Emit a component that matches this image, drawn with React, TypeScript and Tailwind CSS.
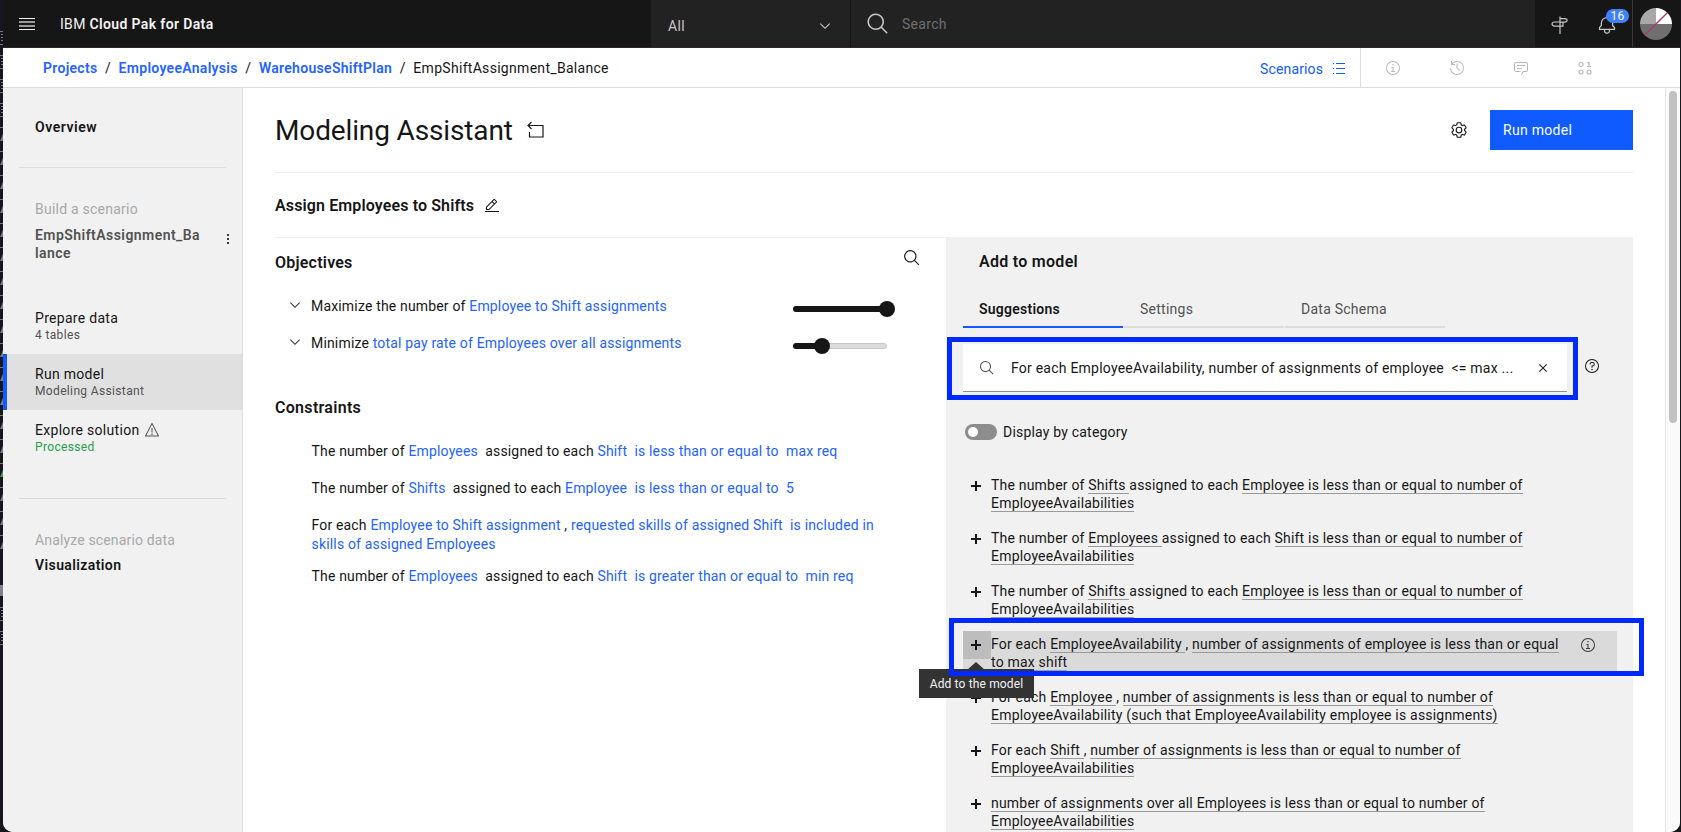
import React from "react";

const P = {
  search:
    "M29,27.5859l-7.5521-7.5521a11.0177,11.0177,0,1,0-1.4141,1.4141L27.5859,29ZM4,13a9,9,0,1,1,9,9A9.01,9.01,0,0,1,4,13Z",
  chevron: "M16 22L6 12l1.4-1.4 8.6 8.6 8.6-8.6L26 12z",
  close:
    "M24 9.4L22.6 8 16 14.6 9.4 8 8 9.4 14.6 16 8 22.6 9.4 24 16 17.4 22.6 24 24 22.6 17.4 16 24 9.4z",
  info: "M17 22V14H13v2h2v6H12v2h8V22zM16 8a1.5 1.5 0 1 0 1.5 1.5A1.5 1.5 0 0 0 16 8zM16,30A14,14,0,1,1,30,16,14,14,0,0,1,16,30ZM16,4A12,12,0,1,0,28,16,12,12,0,0,0,16,4Z",
  bell: "M28.7071,19.293,26,16.5859V13a10.0136,10.0136,0,0,0-9-9.9492V1H15V3.0508A10.0136,10.0136,0,0,0,6,13v3.5859L3.2929,19.293A1,1,0,0,0,3,20v3a1,1,0,0,0,1,1h7v.7768a5.152,5.152,0,0,0,4.5,5.1987A5.0057,5.0057,0,0,0,21,25V24h7a1,1,0,0,0,1-1V20A1,1,0,0,0,28.7071,19.293ZM19,25a3,3,0,0,1-6,0V24h6Zm8-3H5V20.4141L7.707,17.707A1,1,0,0,0,8,17V13a8,8,0,0,1,16,0v4a1,1,0,0,0,.293.707L27,20.4141Z",
  recent:
    "M20.59 22L15 16.41V7h2v8.58l5 5.01zM16,2A13.94,13.94,0,0,0,6,6.23V2H4v8h8V8H7.08A12,12,0,1,1,4,16H2A14,14,0,1,0,16,2Z",
  chat: "M17.74,30,16,29l4-7h6a2,2,0,0,0,2-2V8a2,2,0,0,0-2-2H6A2,2,0,0,0,4,8V20a2,2,0,0,0,2,2h9v2H6a4,4,0,0,1-4-4V8A4,4,0,0,1,6,4H26a4,4,0,0,1,4,4V20a4,4,0,0,1-4,4H21.16ZM8 10H24V12H8zM8 16H18V18H8z",
  edit: "M2 26H30V28H2zM25.4,9c.8-.8.8-2,0-2.8l-3.6-3.6c-.8-.8-2-.8-2.8,0l-15,15V24h6.4L25.4,9zM20.4,4L24,7.6l-3,3L17.4,7L20.4,4zM6,22v-3.6l10-10l3.6,3.6l-10,10H6z",
  settings:
    "M27,16.76c0-.25,0-.5,0-.76s0-.51,0-.77l1.92-1.68A2,2,0,0,0,29.3,11L26.94,7a2,2,0,0,0-1.73-1,2,2,0,0,0-.64.1l-2.43.82a11.35,11.35,0,0,0-1.31-.75l-.51-2.52a2,2,0,0,0-2-1.61H13.64a2,2,0,0,0-2,1.61l-.51,2.52a11.48,11.48,0,0,0-1.32.75L7.43,6.06A2,2,0,0,0,6.79,6,2,2,0,0,0,5.06,7L2.7,11a2,2,0,0,0,.41,2.51L5,15.24c0,.25,0,.5,0,.76s0,.51,0,.77L3.11,18.45A2,2,0,0,0,2.7,21L5.06,25a2,2,0,0,0,1.73,1,2,2,0,0,0,.64-.1l2.43-.82a11.35,11.35,0,0,0,1.31.75l.51,2.52a2,2,0,0,0,2,1.61h4.72a2,2,0,0,0,2-1.61l.51-2.52a11.48,11.48,0,0,0,1.32-.75l2.42.82a2,2,0,0,0,.64.1,2,2,0,0,0,1.73-1L29.3,21a2,2,0,0,0-.41-2.51ZM25.21,24l-3.43-1.16a8.86,8.86,0,0,1-2.71,1.57L18.36,28H13.64l-.71-3.55a9.36,9.36,0,0,1-2.7-1.57L6.79,24,4.43,20l2.72-2.4a8.9,8.9,0,0,1,0-3.13L4.43,12,6.79,8l3.43,1.16a8.86,8.86,0,0,1,2.71-1.57L13.64,4h4.72l.71,3.55a9.36,9.36,0,0,1,2.7,1.57L25.21,8,27.57,12l-2.72,2.4a8.9,8.9,0,0,1,0,3.13L27.57,20ZM16,22a6,6,0,1,1,6-6A5.94,5.94,0,0,1,16,22Zm0-10a3.91,3.91,0,0,0-4,4,3.91,3.91,0,0,0,4,4,3.91,3.91,0,0,0,4-4A3.91,3.91,0,0,0,16,12Z",
  warning:
    "M16,23a1.5,1.5,0,1,0,1.5,1.5A1.5,1.5,0,0,0,16,23ZM15 12H17V21H15zM29,29H3a1,1,0,0,1-.89-1.46l13-25a1,1,0,0,1,1.78,0l13,25A1,1,0,0,1,29,29ZM4.65,27h22.7L16,5.17z",
  help: "M16,2A14,14,0,1,0,30,16,14,14,0,0,0,16,2Zm0,26A12,12,0,1,1,28,16,12,12,0,0,1,16,28ZM16 21.5a1.5 1.5 0 1 0 1.5 1.5A1.5 1.5 0 0 0 16 21.5zM17,8H15.5A4.49,4.49,0,0,0,11,12.5V13h2v-.5A2.5,2.5,0,0,1,15.5,10H17a2.5,2.5,0,0,1,0,5H15v4.5h2V17a4.5,4.5,0,0,0,0-9Z",
};

function Icon({ d, size = 16, className = "" }: { d: string; size?: number; className?: string }) {
  return (
    <svg width={size} height={size} viewBox="0 0 32 32" fill="currentColor" fillRule="evenodd" className={`shrink-0 ${className}`}>
      <path d={d} />
    </svg>
  );
}

function Plus() {
  return (
    <svg width="10" height="10" viewBox="0 0 10 10" fill="none" stroke="#161616" strokeWidth="2" className="mr-0.5 shrink-0">
      <path d="M5 0v10M0 5h10" />
    </svg>
  );
}

/* Sliver of the window behind the app */
function DesktopEdge() {
  const docs = [31, 55, 79, 103, 607, 631];
  const marks = Array.from({ length: 18 }, (_, i) => 127 + i * 24);
  return (
    <svg width="3" height="832" viewBox="0 0 3 832" className="shrink-0">
      {docs.map((y) => (
        <path key={y} d={`M0 ${y + 0.5}h3M1 ${y + 3.5}h2M1 ${y + 6.5}h2M1 ${y + 9.5}h2M0 ${y + 13.5}h3`} stroke="#777a85" />
      ))}
      {marks.map((y) => (
        <g key={y} fill={y === 463 ? "#4c9a5b" : "#777d8c"}>
          <path d={`M0 ${y}h3v1H0z`} />
          <path d={`M3 ${y + 7}v7H0z`} />
        </g>
      ))}
      <path d="M0 585h3v11H0z" fill="#7d8290" />
    </svg>
  );
}

function Header() {
  return (
    <header className="flex h-12 shrink-0 border-b border-[#2f282b] bg-[#161616] text-sm tracking-[.3px]">
      <div className="flex w-[648px] items-center pl-4">
        <svg width="16" height="12" viewBox="0 0 16 12" fill="none">
          <path d="M0 .5h16M0 11.5h16" stroke="#f4f4f4" />
          <path d="M0 4h16M0 8h16" stroke="#c6c6c6" strokeWidth="1.3" />
        </svg>
        <div className="ml-[25px] text-[#f4f4f4]">
          IBM <span className="font-semibold tracking-[.37px]">Cloud Pak for Data</span>
        </div>
      </div>
      <div className="flex w-[200px] items-center justify-between border-r border-[#161616] bg-[#222] pt-1 pr-[17px] pl-[17px] text-[#c6c6c6]">
        All
        <Icon d={P.chevron} />
      </div>
      <div className="flex flex-1 items-center bg-[#222] pl-[15px]">
        <Icon d={P.search} size={24} className="mt-px text-[#c6c6c6]" />
        <span className="ml-3 text-[#6f6f6f]">Search</span>
      </div>
      <div className="flex w-[98px] items-center border-r border-[#393939] pl-[15px] text-[#c6c6c6]">
        <svg width="20" height="20" viewBox="0 0 20 20" fill="none" stroke="currentColor" strokeWidth="1.2" className="mt-0.5">
          <path d="M10 1.5V19M10 3.6h5.2q2 .4 2 1.7t-2 1.8H10M10 7H4q-2 .6-2 2.1t2 2h9V7" />
        </svg>
        <div className="relative ml-[27px]">
          <Icon d={P.bell} size={20} className="mt-0.5" />
          <span className="absolute -top-[4px] left-[9px] flex h-[14px] w-[23px] items-center justify-center rounded-full bg-[#4080ff] text-xs text-white">
            16
          </span>
        </div>
      </div>
      <div className="flex w-[47px] items-center pl-[7px]">
        <svg width="32" height="32" viewBox="0 0 32 32">
          <path d="M16 16V0A16 16 0 0 0 0 16z" fill="#a8a8a8" />
          <path d="M16 16V0a16 16 0 0 1 16 16z" fill="#fff" />
          <path d="M0 16a16 16 0 0 0 32 0z" fill="#6f6f6f" />
          <path d="M4.7 27.3L27.3 4.7" stroke="#a83a78" strokeWidth="1.4" />
        </svg>
      </div>
    </header>
  );
}

function Breadcrumbs() {
  return (
    <div className="flex h-10 shrink-0 items-center border-b border-[#dcdcdc] text-sm tracking-[.3px]">
      <nav className="flex flex-1 gap-[7.5px] pl-10 whitespace-nowrap">
        <span className="font-semibold text-[#2463ff]">Projects</span>
        <span>/</span>
        <span className="font-semibold text-[#2463ff]">EmployeeAnalysis</span>
        <span>/</span>
        <span className="font-semibold text-[#2463ff]">WarehouseShiftPlan</span>
        <span>/</span>
        <span>EmpShiftAssignment_Balance</span>
      </nav>
      <div className="flex h-full w-[101px] items-center justify-between border-r border-[#dcdcdc] pt-0.5 pr-[15px] tracking-[.15px] text-[#0f5bff]">
        Scenarios
        <svg width="12" height="11" viewBox="0 0 12 11" fill="none" stroke="currentColor">
          <path d="M0 .5h1M3 .5h9M0 10.5h1M3 10.5h9" />
          <path d="M0 5.5h1M3 5.5h9" />
        </svg>
      </div>
      <div className="flex w-[319px] gap-12 pl-6 text-[#b8b8b8]">
        <Icon d={P.info} />
        <Icon d={P.recent} />
        <Icon d={P.chat} />
        <svg width="16" height="16" viewBox="0 0 16 16" fill="none" stroke="currentColor" strokeWidth="1.2">
          <circle cx="4" cy="4.5" r="2" />
          <circle cx="4" cy="12" r="2" />
          <circle cx="12" cy="12" r="2" />
          <path d="M10.3 2.6h1.7v3.8M10 6.5h4" />
        </svg>
      </div>
    </div>
  );
}

function NavItem({ title, sub, active, warn, done }: { title: string; sub: string; active?: boolean; warn?: boolean; done?: boolean }) {
  return (
    <div className={active ? "flex h-14 flex-col justify-center border-l-4 border-[#0f5bff] bg-[#e0e0e0] pl-7" : "flex h-14 flex-col justify-center pl-8"}>
      <div className="flex items-center gap-1 text-sm leading-[18px] tracking-[.3px]">
        {title}
        {warn && <Icon d={P.warning} className="text-[#525252]" />}
      </div>
      <div className={done ? "text-xs tracking-[.35px] text-[#24a148]" : "text-xs tracking-[.35px] text-[#525252]"}>{sub}</div>
    </div>
  );
}

function Sidebar() {
  return (
    <aside className="w-60 shrink-0 border-r border-[#dcdcdc] bg-[#f1f1f1] pt-[29px] text-sm tracking-[.23px]">
      <div className="h-5 pl-8 font-semibold tracking-[.55px]">Overview</div>
      <div className="mr-4 ml-4 mt-[30px] border-t border-[#dcdcdc]" />
      <div className="mt-[31px] pl-8 text-[#a8a8a8]">Build a scenario</div>
      <div className="mt-[7px] flex items-center justify-between pr-[13px] pl-8 font-semibold tracking-[.45px] text-[#525252]">
        <div className="leading-[18px]">
          EmpShiftAssignment_Ba
          <br />
          lance
        </div>
        <svg width="2" height="10" viewBox="0 0 2 10" fill="#393939" className="-mt-2.5">
          <path d="M0 0h2v2H0zM0 4h2v2H0zM0 8h2v2H0z" />
        </svg>
      </div>
      <div className="mt-[36px]">
        <NavItem title="Prepare data" sub="4 tables" />
        <NavItem title="Run model" sub="Modeling Assistant" active />
        <NavItem title="Explore solution" sub="Processed" warn done />
      </div>
      <div className="mr-4 ml-4 mt-8 border-t border-[#dcdcdc]" />
      <div className="mt-[31px] pl-8 tracking-[.15px] text-[#a8a8a8]">Analyze scenario data</div>
      <div className="mt-[5px] pl-8 font-semibold tracking-[.4px]">Visualization</div>
    </aside>
  );
}

const B = ({ children }: { children: React.ReactNode }) => <span className="text-[#2463ff]">{children}</span>;
const U = ({ children }: { children: React.ReactNode }) => <span className="border-b border-[#9a9a9a]">{children}</span>;

function Objective({ children, full }: { children: React.ReactNode; full?: boolean }) {
  return (
    <div className="flex h-[37px] items-start pl-3">
      <Icon d={P.chevron} className="mt-px text-[#393939]" />
      <div className="ml-2 w-[482px] leading-5">{children}</div>
      <svg width="104" height="16" viewBox="0 0 104 16" className="mt-[5px]">
        <rect x=".5" y="5.5" width="93" height="5" rx="2.5" fill="#dcdcdc" stroke="#c8c8c8" />
        <rect y="5" width={full ? 94 : 34} height="6" rx="3" fill="#161616" />
        <circle cx={full ? 94 : 29} cy="8" r="8" fill="#161616" />
      </svg>
    </div>
  );
}

function ModelPane() {
  return (
    <section className="w-[671px] shrink-0 border-t border-[#efefef]">
      <div className="flex items-start justify-between pr-[25px]">
        <h2 className="mt-[13px] text-base leading-6 font-semibold tracking-[.22px]">Objectives</h2>
        <Icon d={P.search} size={18} className="mt-[11px]" />
      </div>
      <div className="mt-[21px] text-sm tracking-[.17px]">
        <Objective full>
          Maximize the number of <B>Employee to Shift assignments</B>
        </Objective>
        <Objective>
          Minimize <B>total pay rate of Employees over all assignments</B>
        </Objective>
      </div>
      <h2 className="mt-[26px] text-base leading-6 font-semibold tracking-[.3px]">Constraints</h2>
      <div className="mt-[22px] flex flex-col gap-[18px] pl-[36.5px] text-sm leading-[19px] tracking-[.17px] whitespace-pre">
        <p>The number of <B>Employees</B>{"  assigned to each "}<B>{"Shift  is less than or equal to  max req"}</B></p>
        <p>The number of <B>Shifts</B>{"  assigned to each "}<B>{"Employee  is less than or equal to  5"}</B></p>
        <p className="-mb-[5px]">
          For each <B>Employee to Shift assignment</B> , <B>{"requested skills of assigned Shift  is included in\nskills of assigned Employees"}</B>
        </p>
        <p>The number of <B>Employees</B>{"  assigned to each "}<B>{"Shift  is greater than or equal to  min req"}</B></p>
      </div>
    </section>
  );
}

const items: React.ReactNode[] = [
  <>The number of <U>{"Shifts "}</U>assigned to each <U>{"Employee is less than or equal to number of\nEmployeeAvailabilities"}</U></>,
  <>The number of <U>{"Employees "}</U>assigned to each <U>{"Shift is less than or equal to number of\nEmployeeAvailabilities"}</U></>,
  <>The number of <U>{"Shifts "}</U>assigned to each <U>{"Employee is less than or equal to number of\nEmployeeAvailabilities"}</U></>,
  <>For each <U>{"EmployeeAvailability "}</U>, <U>{"number of assignments of employee is less than or equal\nto max shift"}</U></>,
  <>For each <U>{"Employee "}</U>, <U>{"number of assignments is less than or equal to number of\nEmployeeAvailability (such that EmployeeAvailability employee is assignments)"}</U></>,
  <>For each <U>{"Shift "}</U>, <U>{"number of assignments is less than or equal to number of\nEmployeeAvailabilities"}</U></>,
  <><U>{"number of assignments over all Employees is less than or equal to number of\nEmployeeAvailabilities"}</U></>,
];

function Suggestion({ children, active }: { children: React.ReactNode; active?: boolean }) {
  return (
    <div className="relative h-[53px] shrink-0">
      <div className={active ? "flex h-[41px] w-[654px] bg-[#dadada]" : "flex h-[41px]"}>
        <div className={active ? "flex size-7 shrink-0 items-center justify-center bg-[#bdbdbd]" : "flex size-7 shrink-0 items-center justify-center"}>
          <Plus />
        </div>
        <p className="w-[583px] shrink-0 pt-1 whitespace-pre">{children}</p>
        {active && <Icon d={P.info} className="mt-1.5 ml-1.5 text-[#393939]" />}
      </div>
      {active && (
        <>
          <div className="absolute top-[31px] left-1 z-10 border-x-[9px] border-b-[8px] border-x-transparent border-b-[#333]" />
          <div className="absolute top-[38px] left-[-44px] z-10 flex h-[29px] w-[115px] items-center justify-center bg-[#333] text-xs tracking-[.15px] text-[#f4f4f4]">
            Add to the model
          </div>
          <div className="absolute top-[-13px] left-[-14px] z-20 h-[58px] w-[695px] border-[5px] border-[#0029ff]" />
        </>
      )}
    </div>
  );
}

function Tabs() {
  return (
    <div className="mt-[25px] grid grid-cols-[160px_160px_160px] gap-px text-sm leading-5 tracking-[.25px] text-[#525252]">
      <div className="h-[29px] border-b-2 border-[#0f5bff] pl-4 font-semibold text-[#161616]">Suggestions</div>
      <div className="h-[29px] border-b-2 border-[#dcdcdc] pl-4">Settings</div>
      <div className="h-[29px] border-b-2 border-[#dcdcdc] pl-4">Data Schema</div>
    </div>
  );
}

function SuggestionPane() {
  return (
    <section className="flex w-[687px] shrink-0 flex-col bg-[#f1f1f1] pl-[17px] text-sm tracking-[.2px]">
      <h2 className="mt-[13px] pl-4 text-base leading-6 font-semibold tracking-[.28px]">Add to model</h2>
      <Tabs />
      <div className="mt-[9px] -ml-4 flex items-start">
        <div className="h-[63px] w-[631px] border-[5px] border-[#0029ff] pt-0.5 pr-[6px] pl-[11px]">
          <div className="flex h-12 items-center border-b border-[#8d8d8d] bg-white pr-4 pl-4 whitespace-pre">
            <Icon d={P.search} className="text-[#525252]" />
            <span className="ml-4 flex-1 tracking-[.23px]">{"For each EmployeeAvailability, number of assignments of employee  <= max ..."}</span>
            <Icon d={P.close} />
          </div>
        </div>
        <Icon d={P.help} className="mt-[21px] ml-1.5" />
      </div>
      <div className="mt-[22px] flex h-5 items-center gap-1.5 pl-0.5">
        <div className="flex h-4 w-8 items-center rounded-full bg-[#8d8d8d] pl-[3px]">
          <div className="size-2.5 rounded-full bg-white" />
        </div>
        Display by category
      </div>
      <div className="mt-[30px] flex flex-col leading-[18px]">
        {items.map((t, i) => (
          <Suggestion key={i} active={i === 3}>{t}</Suggestion>
        ))}
      </div>
    </section>
  );
}

export default function App() {
  return (
    <div className="flex h-[832px] w-[1681px] overflow-hidden bg-[#16171c] font-['Roboto','Liberation_Sans',sans-serif] text-[#161616]">
      <DesktopEdge />
      <div className="flex h-full w-[1677px] flex-col overflow-hidden rounded-b-[10px] bg-white">
        <Header />
        <Breadcrumbs />
        <div className="flex min-h-0 flex-1">
          <Sidebar />
          <main className="min-w-0 flex-1 overflow-hidden pl-8">
            <div className="flex h-[85px] w-[1358px] items-center border-b border-[#efefef]">
              <h1 className="pt-0.5 text-[28px] leading-9 tracking-[-.14px]">Modeling Assistant</h1>
              <svg width="18" height="18" viewBox="0 0 18 18" fill="none" stroke="#161616" strokeWidth="1.2" className="ml-[14px]">
                <path d="M4.5 1L1 4.5 4.5 8M1.5 4.5h14.5v11.5H2.5V11" />
              </svg>
              <div className="flex-1" />
              <Icon d={P.settings} size={18} />
              <button className="ml-[22px] h-10 w-[143px] bg-[#0f5bff] pl-[13px] text-left text-sm tracking-[.3px] text-white">Run model</button>
            </div>
            <div className="flex h-16 items-center gap-2.5 pt-0.5">
              <h2 className="text-base font-semibold tracking-[.12px]">Assign Employees to Shifts</h2>
              <Icon d={P.edit} />
            </div>
            <div className="flex h-[595px]">
              <ModelPane />
              <SuggestionPane />
            </div>
          </main>
          <div className="flex w-[15px] shrink-0 border-l border-[#e6e6e6] bg-[#fafafa] pt-[3px] pl-[3px]">
            <div className="h-[332px] w-2 rounded-full bg-[#c1c1c1]" />
          </div>
        </div>
      </div>
    </div>
  );
}
